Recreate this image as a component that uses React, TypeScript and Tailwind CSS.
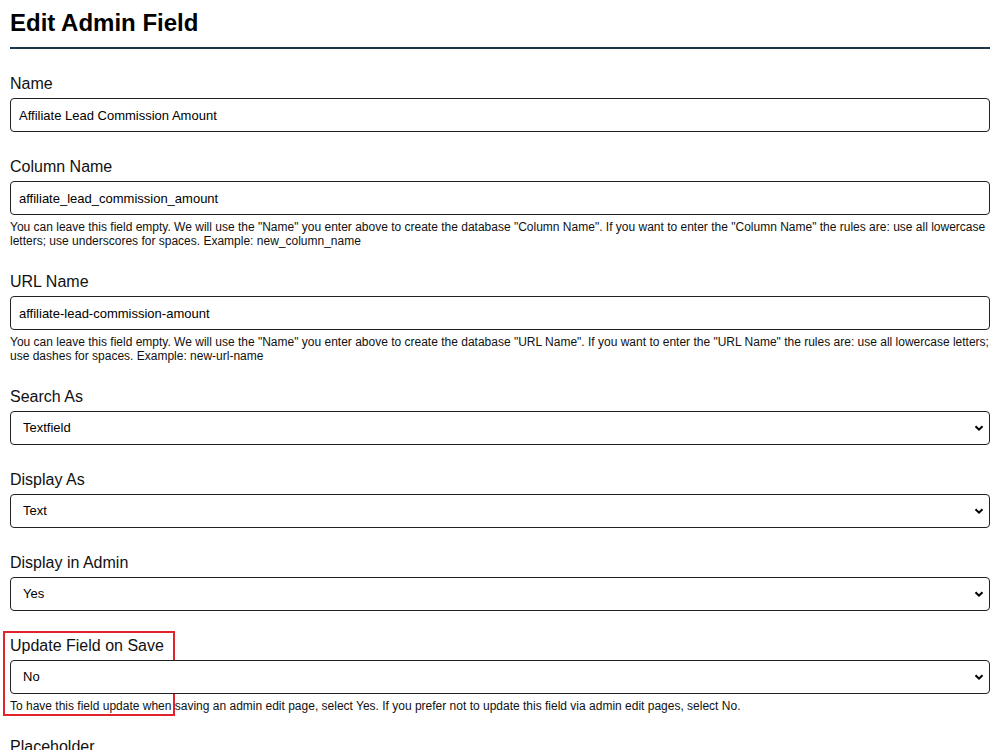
import React from "react";

type Field = {
  label: string;
  kind: "input" | "select";
  value: string;
  help?: string;
  marked?: boolean;
};

const fields: Field[] = [
  { label: "Name", kind: "input", value: "Affiliate Lead Commission Amount" },
  {
    label: "Column Name",
    kind: "input",
    value: "affiliate_lead_commission_amount",
    help: 'You can leave this field empty. We will use the "Name" you enter above to create the database "Column Name". If you want to enter the "Column Name" the rules are: use all lowercase letters; use underscores for spaces. Example: new_column_name',
  },
  {
    label: "URL Name",
    kind: "input",
    value: "affiliate-lead-commission-amount",
    help: 'You can leave this field empty. We will use the "Name" you enter above to create the database "URL Name". If you want to enter the "URL Name" the rules are: use all lowercase letters; use dashes for spaces. Example: new-url-name',
  },
  { label: "Search As", kind: "select", value: "Textfield" },
  { label: "Display As", kind: "select", value: "Text" },
  { label: "Display in Admin", kind: "select", value: "Yes" },
  {
    label: "Update Field on Save",
    kind: "select",
    value: "No",
    marked: true,
    help: "To have this field update when saving an admin edit page, select Yes. If you prefer not to update this field via admin edit pages, select No.",
  },
  { label: "Placeholder", kind: "input", value: "" },
];

const Chevron = () => (
  <svg
    className="pointer-events-none absolute right-[6px] top-1/2 -translate-y-1/2"
    width="10"
    height="10"
    viewBox="0 0 10 10"
  >
    <path d="M1.5 3.2 L5 6.7 L8.5 3.2" fill="none" stroke="#000" strokeWidth="2" />
  </svg>
);

const FieldRow: React.FC<{ field: Field }> = ({ field }) => (
  <div className={field.help ? "relative mb-[25px]" : "relative mb-[26px]"}>
    {field.marked && (
      <div className="pointer-events-none absolute left-[-7px] top-[-6px] h-[85px] w-[172px] border-2 border-[#e0242a]" />
    )}
    <label className="mb-[5px] block text-[16px] leading-[18px] text-[#111]">{field.label}</label>
    {field.kind === "input" ? (
      <input
        readOnly
        value={field.value}
        className="block h-[34px] w-full rounded-[4px] border border-[#222] bg-white px-[8px] text-[13px] text-black outline-none"
      />
    ) : (
      <div className="relative">
        <select
          value={field.value}
          onChange={() => {}}
          className="block h-[34px] w-full appearance-none rounded-[4px] border border-[#222] bg-white px-[12px] text-[13px] text-black outline-none"
        >
          <option>{field.value}</option>
        </select>
        <Chevron />
      </div>
    )}
    {field.help && (
      <p className="mt-[5px] text-[12px] leading-[14px] text-[#111]">{field.help}</p>
    )}
  </div>
);

export default function App() {
  return (
    <div
      className="h-[750px] overflow-hidden bg-white px-[10px]"
      style={{ fontFamily: '"Liberation Sans", Arial, sans-serif' }}
    >
      <h1 className="border-b-2 border-[#1b3446] pb-[10px] pt-[9px] text-[24px] font-bold leading-[28px] text-black">
        Edit Admin Field
      </h1>
      <form className="mt-[26px]">
        {fields.map((f) => (
          <FieldRow key={f.label} field={f} />
        ))}
      </form>
    </div>
  );
}
